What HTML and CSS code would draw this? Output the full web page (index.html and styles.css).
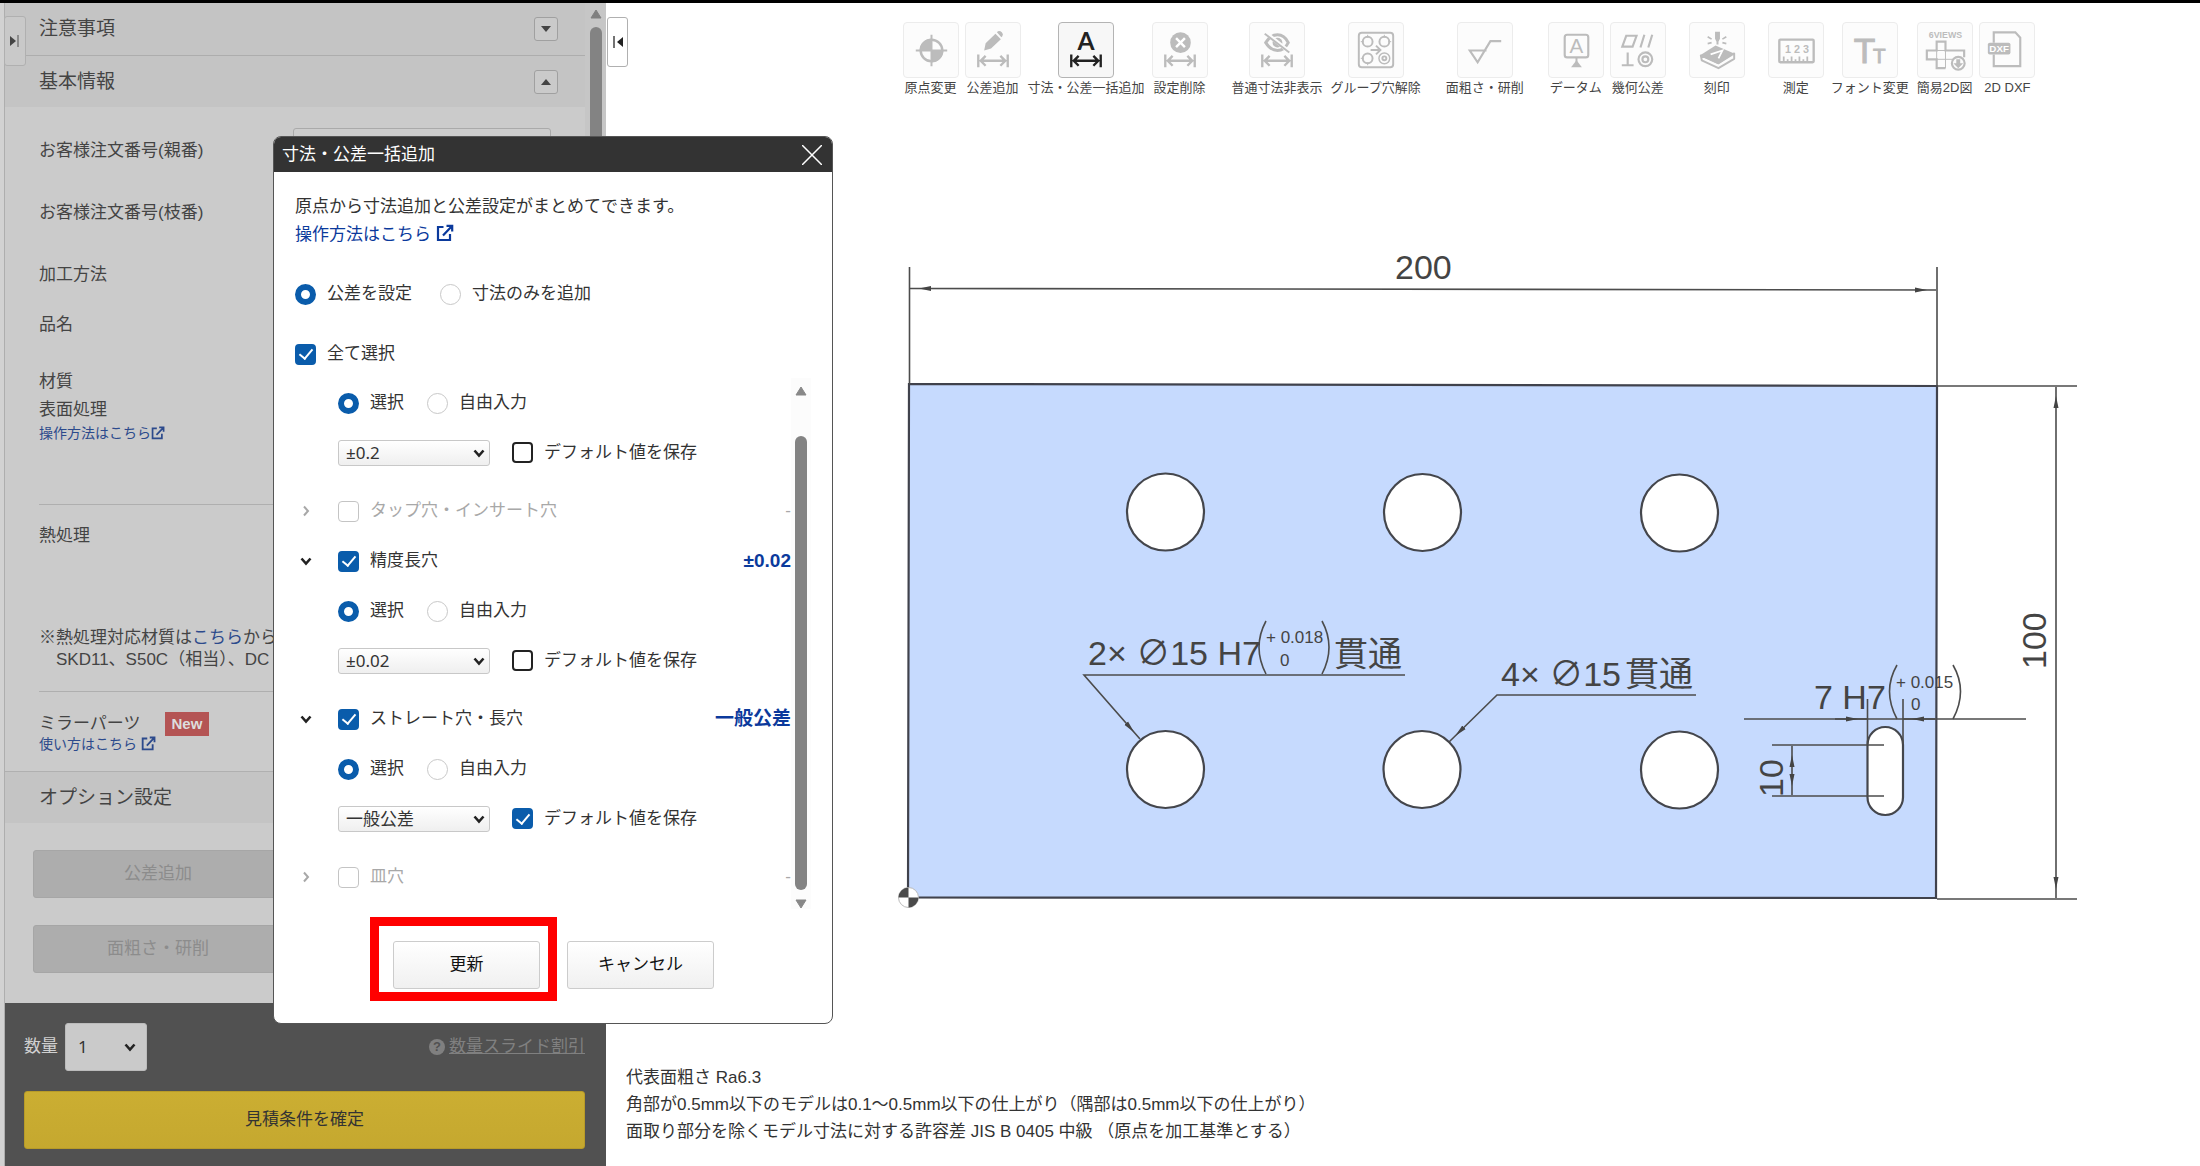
FILE: index.html
```html
<!DOCTYPE html>
<html lang="ja">
<head>
<meta charset="utf-8">
<meta name="viewport" content="width=device-width, initial-scale=1">
<title>寸法・公差一括追加</title>
<link rel="stylesheet" href="styles.css">
</head>
<body>
<svg class="sprite" aria-hidden="true">
  <symbol id="i-span" viewBox="0 0 55 55"><path d="M12.500 32v13M42.500 32v13M15 38.500h25M20 33.500l-5 5 5 5M35 33.500l5 5-5 5" fill="none" stroke="currentColor" stroke-width="2.400"/></symbol>
  <symbol id="i-ext" viewBox="0 0 18 18"><path d="M7.500 3H2v13h12v-6M10.500 1.800H16.200V7.500M16 2L7 11.500" fill="none" stroke="currentColor" stroke-width="2.200"/></symbol>
  <symbol id="i-down" viewBox="0 0 12 12"><path d="M1.500 3.500L6 8.500l4.500-5" fill="none" stroke="currentColor" stroke-width="2.600"/></symbol>
  <symbol id="i-right" viewBox="0 0 12 12"><path d="M4 1.500L8 6l-4 4.500" fill="none" stroke="currentColor" stroke-width="2"/></symbol>
</svg>
<div class="app">
  <aside class="sidebar">
    <button class="tab tab-left" aria-label="パネルを開く"><svg width="10" height="12" viewBox="0 0 10 12"><path d="M0 1l6 5-6 5z" fill="#444"/><path d="M8 0v12" stroke="#777" stroke-width="1.500"/></svg></button>
    <div class="panel">
      <div class="panel-body">
        <div class="head"><span>注意事項</span><button class="fold" aria-label="開く"><svg width="10" height="8" viewBox="0 0 10 8"><path d="M0 1h10L5 7z" fill="#444"/></svg></button></div>
        <div class="head head-open"><span>基本情報</span><button class="fold" aria-label="閉じる"><svg width="10" height="8" viewBox="0 0 10 8"><path d="M0 7h10L5 1z" fill="#444"/></svg></button></div>
        <div class="fields">
          <div class="field"><label for="parent-no">お客様注文番号(親番)</label><input id="parent-no" class="entry" type="text"></div>
          <div class="field"><span>お客様注文番号(枝番)</span></div>
          <div class="field"><span>加工方法</span></div>
          <div class="field field-low"><span>品名</span></div>
          <div class="material">
            <div>材質</div>
            <div>表面処理</div>
            <a class="small-link" href="#">操作方法はこちら<svg width="14" height="14"><use href="#i-ext"/></svg></a>
          </div>
          <div class="heat">
            <div>熱処理</div>
            <p class="heat-note">※熱処理対応材質は<a href="#">こちら</a>から<br><span class="indent">SKD11、S50C（相当）、DC</span></p>
          </div>
          <div class="mirror">
            <div class="mirror-title">ミラーパーツ<span class="new">New</span></div>
            <a class="small-link" href="#">使い方はこちら <svg width="15" height="15"><use href="#i-ext"/></svg></a>
          </div>
        </div>
        <div class="head head-option"><span>オプション設定</span></div>
        <div class="options">
          <button disabled>公差追加</button>
          <button disabled>面粗さ・研削</button>
        </div>
      </div>
      <div class="track track-side">
        <svg width="12" height="10" viewBox="0 0 12 10"><path d="M6 1l5 8H1z" fill="#808080" stroke="#808080" stroke-linejoin="round"/></svg>
        <div class="thumb"></div>
      </div>
    </div>
    <div class="order">
      <div class="order-row">
        <label for="qty">数量</label>
        <span class="pick pick-qty"><select id="qty"><option>1</option></select><svg width="12" height="12"><use href="#i-down"/></svg></span>
        <a class="slide" href="#"><span class="help">?</span><span class="slide-text">数量スライド割引</span></a>
      </div>
      <button class="confirm">見積条件を確定</button>
    </div>
  </aside>

  <main class="work">
    <button class="tab tab-right" aria-label="パネルを閉じる"><svg width="10" height="12" viewBox="0 0 10 12"><path d="M10 1L4 6l6 5z" fill="#222"/><path d="M1 0v12" stroke="#444" stroke-width="1.500"/></svg></button>
    <div class="toolbar">
      <div class="group">
        <button class="tool"><svg class="tile" viewBox="0 0 55 55"><circle cx="28" cy="28" r="11" fill="none" stroke="currentColor" stroke-width="2.500"/><path d="M28 28V16A12 12 0 0 0 16 28zM28 28v12a12 12 0 0 0 12-12z" fill="currentColor"/><path d="M28 12v32M12 28h32" stroke="currentColor" stroke-width="2"/></svg>原点変更</button>
        <button class="tool"><svg class="tile" viewBox="0 0 55 55"><path d="M18.500 28l1.500-7.500L30 11l5.500 5.500L25.500 26zM31.500 9.500l1-1q2-1 4 1t.500 4l-1 1z" fill="currentColor"/><use href="#i-span"/></svg>公差追加</button>
        <button class="tool active"><svg class="tile" viewBox="0 0 55 55"><text x="27.500" y="27" class="big-a">A</text><use href="#i-span"/></svg>寸法・公差一括追加</button>
        <button class="tool"><svg class="tile" viewBox="0 0 55 55"><circle cx="28" cy="20" r="10.500" fill="currentColor"/><path d="M23.500 15.500l9 9m0-9l-9 9" stroke="#fff" stroke-width="2.500"/><use href="#i-span"/></svg>設定削除</button>
      </div>
      <div class="group">
        <button class="tool"><svg class="tile" viewBox="0 0 55 55"><path d="M16 20q5-8 12-8t11 8q-4 8-11 8t-12-8z" fill="none" stroke="currentColor" stroke-width="3"/><circle cx="28" cy="20" r="5" fill="currentColor"/><path d="M16 10l25 20" stroke="#fcfcfc" stroke-width="4"/><path d="M15 11l25 19" stroke="currentColor" stroke-width="2"/><use href="#i-span"/></svg>普通寸法非表示</button>
        <button class="tool"><svg class="tile" viewBox="0 0 55 55"><g fill="none" stroke="currentColor" stroke-width="2"><rect x="10" y="10" width="35" height="35" rx="3"/><circle cx="19" cy="19" r="5"/><circle cx="36" cy="19" r="5"/><circle cx="19" cy="36" r="5"/><circle cx="36" cy="36" r="5.500" stroke-width="1.500"/><circle cx="36" cy="36" r="2"/><path d="M19 12v3M12 19h3M36 12v3M43 19h-3M19 43v-3M12 36h3" stroke-width="1"/><path d="M22 27.500h9M27.500 23l4.500 4.500-4.500 4.500"/></g></svg>グループ穴解除</button>
      </div>
      <div class="group">
        <button class="tool"><svg class="tile" viewBox="0 0 55 55"><path d="M29 28H12l8 12 13-21.500h11" fill="none" stroke="currentColor" stroke-width="2.200"/></svg>面粗さ・研削</button>
      </div>
      <div class="group">
        <button class="tool"><svg class="tile" viewBox="0 0 55 55"><rect x="16" y="12" width="24" height="23" rx="2.500" fill="none" stroke="currentColor" stroke-width="2.200"/><text x="28" y="31" class="box-a">A</text><path d="M28 35v5" stroke="currentColor" stroke-width="2"/><path d="M28 38l5.500 7h-11z" fill="currentColor"/></svg>データム</button>
        <button class="tool"><svg class="tile" viewBox="0 0 55 55"><g fill="none" stroke="currentColor" stroke-width="2.200"><path d="M15.500 13H26l-4 11H11.500zM34 12l-4 13M42 12l-4 13M17 30v12M11 43h12"/><circle cx="35" cy="37" r="7"/><circle cx="35" cy="37" r="3"/></g></svg>幾何公差</button>
      </div>
      <div class="group">
        <button class="tool"><svg class="tile" viewBox="0 0 55 55"><path d="M10 33l16-10 19 8-16 11z" fill="currentColor"/><path d="M11 33l18 8 16-10v5.500L29 46l-17-8z" fill="none" stroke="currentColor" stroke-width="2" stroke-linejoin="round"/><path d="M21 32l12-4-4 8" fill="none" stroke="#fff" stroke-width="1.800"/><path d="M25.500 9h5v7l-1.500 3v3h-2v-3l-1.500-3z" fill="currentColor"/><path d="M18 14l4 2.500M37 14l-4 2.500M18 21l4-1M37 21l-4-1" stroke="currentColor" stroke-width="1.600"/></svg>刻印</button>
      </div>
      <div class="group">
        <button class="tool"><svg class="tile" viewBox="0 0 55 55"><rect x="10.500" y="17" width="35" height="23" rx="1" fill="none" stroke="currentColor" stroke-width="2.400"/><text x="28.500" y="31" class="digits">1 2 3</text><path d="M15 40v-6M19 40v-3M23 40v-6M27 40v-3M31 40v-6M35 40v-3M39 40v-6" stroke="currentColor" stroke-width="1.800"/></svg>測定</button>
        <button class="tool"><svg class="tile" viewBox="0 0 55 55"><text x="22" y="41" class="t-big">T</text><text x="37" y="41" class="t-small">T</text></svg>フォント変更</button>
        <button class="tool"><svg class="tile" viewBox="0 0 55 55"><text x="28" y="15" class="views">6VIEWS</text><g fill="none" stroke="currentColor" stroke-width="2.200"><path d="M28 46h-9v-9H9V28h10v-9h9v9h19v7"/><path d="M19 28v9M19 28h9v18M19 37h17" stroke-width="1"/><circle cx="41" cy="41" r="6.500" fill="#fcfcfc"/></g><path d="M39 37h4v4h3l-5 5-5-5h3z" fill="currentColor"/></svg>簡易2D図</button>
        <button class="tool"><svg class="tile" viewBox="0 0 55 55"><path d="M14 20V9.500h22l5 5.500v29H14V32" fill="none" stroke="currentColor" stroke-width="2.200"/><rect x="8" y="20" width="23" height="12" rx="2" fill="currentColor"/><text x="19.500" y="30" class="dxf">DXF</text></svg>2D DXF</button>
      </div>
    </div>

    <svg class="drawing" viewBox="606 100 1594 940" role="img" aria-label="プレートの2D図">
      <defs><marker id="arrow" markerUnits="userSpaceOnUse" markerWidth="22" markerHeight="6" refX="21" refY="3" orient="auto-start-reverse"><path d="M0 0.500L12 3 0 5.500z" fill="#444"/></marker></defs>
      <path d="M909 384L1937 386 1936 898 908 897.500z" fill="#c6dafe" stroke="#40424c" stroke-width="2.200"/>
      <g fill="#fff" stroke="#44464c" stroke-width="2.200">
        <circle cx="1165.500" cy="512" r="38.500"/><circle cx="1422.500" cy="512.500" r="38.500"/><circle cx="1679.500" cy="513" r="38.500"/>
        <circle cx="1165.500" cy="769.500" r="38.500"/><circle cx="1422" cy="769.500" r="38.500"/><circle cx="1679.500" cy="770" r="38.500"/>
        <rect x="1867.500" y="727" width="35.500" height="88" rx="17.700"/>
      </g>
      <g fill="none" stroke="#4c4c4c" stroke-width="1.600">
        <path d="M909.500 267V384M1937 267V386M1937 386H2077M1937 899H2077"/>
        <path d="M910 288.500L1936 290" marker-start="url(#arrow)" marker-end="url(#arrow)"/>
        <path d="M2056 387V898" marker-start="url(#arrow)" marker-end="url(#arrow)"/>
        <path d="M1405 675H1084L1140 739" marker-end="url(#arrow)"/>
        <path d="M1696 695H1497L1449 742" marker-end="url(#arrow)"/>
        <path d="M1744 719H2026M1867.500 699v45M1903 699v45M1772 745h112M1772 796h112"/>
        <path d="M1792 746v49" marker-start="url(#arrow)" marker-end="url(#arrow)"/>
        <path d="M1835 719h32" marker-end="url(#arrow)"/>
        <path d="M1935 719h-32" marker-end="url(#arrow)"/>
        <path d="M1266 621q-14 26 0 53M1322 621q14 26 0 53M1897 665q-15 26 0 54M1953 665q15 26 0 54"/>
      </g>
      <g class="dims">
        <text x="1395" y="279">200</text>
        <text x="1088" y="665">2× ∅15 H7</text>
        <text x="1334" y="666">貫通</text>
        <text x="1501" y="686">4× ∅15</text>
        <text x="1625" y="686">貫通</text>
        <text x="1814" y="709">7 H7</text>
        <text transform="translate(2046 669) rotate(-90)">100</text>
        <text transform="translate(1783 797) rotate(-90)">10</text>
      </g>
      <g class="tol">
        <text x="1266" y="643">+ 0.018</text><text x="1280" y="666">0</text>
        <text x="1896" y="688">+ 0.015</text><text x="1911" y="710">0</text>
      </g>
      <circle cx="908.500" cy="897.500" r="10" fill="#fff" stroke="#bbb" stroke-width="1"/>
      <path d="M908.500 897.500v-10a10 10 0 0 0-10 10zM908.500 897.500v10a10 10 0 0 0 10-10z" fill="#4a4a4a"/>
    </svg>

    <div class="notes">
      <p>代表面粗さ Ra6.3</p>
      <p>角部が0.5mm以下のモデルは0.1～0.5mm以下の仕上がり（隅部は0.5mm以下の仕上がり）</p>
      <p>面取り部分を除くモデル寸法に対する許容差 JIS B 0405 中級 （原点を加工基準とする）</p>
    </div>
  </main>

  <section class="dialog" role="dialog" aria-labelledby="dialog-title">
    <header class="dialog-head"><h1 id="dialog-title">寸法・公差一括追加</h1><button class="close" aria-label="閉じる"><svg width="20" height="20" viewBox="0 0 20 20"><path d="M0 0l20 20M20 0L0 20" stroke="#fff" stroke-width="1.500"/></svg></button></header>
    <div class="dialog-body">
      <p class="intro">原点から寸法追加と公差設定がまとめてできます。</p>
      <p class="intro"><a href="#">操作方法はこちら <svg width="18" height="18"><use href="#i-ext"/></svg></a></p>
      <div class="mode"><label class="opt"><input type="radio" name="mode" checked>公差を設定</label><label class="opt"><input type="radio" name="mode">寸法のみを追加</label></div>
      <div class="all"><label class="opt"><input type="checkbox" checked>全て選択</label></div>
      <div class="scroller">
        <div class="list">
          <div class="item-body">
            <div class="line"><label class="opt"><input type="radio" name="a" checked>選択</label><label class="opt"><input type="radio" name="a">自由入力</label></div>
            <div class="line line-pick"><span class="pick"><select aria-label="公差"><option>±0.2</option></select><svg width="12" height="12"><use href="#i-down"/></svg></span><label class="opt"><input type="checkbox">デフォルト値を保存</label></div>
          </div>
          <div class="line item off"><svg width="12" height="12"><use href="#i-right"/></svg><label class="opt"><input type="checkbox" disabled>タップ穴・インサート穴</label><span class="value">-</span></div>
          <div class="line item"><svg width="12" height="12"><use href="#i-down"/></svg><label class="opt"><input type="checkbox" checked>精度長穴</label><span class="value">±0.02</span></div>
          <div class="item-body">
            <div class="line"><label class="opt"><input type="radio" name="b" checked>選択</label><label class="opt"><input type="radio" name="b">自由入力</label></div>
            <div class="line line-pick"><span class="pick"><select aria-label="公差"><option>±0.02</option></select><svg width="12" height="12"><use href="#i-down"/></svg></span><label class="opt"><input type="checkbox">デフォルト値を保存</label></div>
          </div>
          <div class="line item"><svg width="12" height="12"><use href="#i-down"/></svg><label class="opt"><input type="checkbox" checked>ストレート穴・長穴</label><span class="value">一般公差</span></div>
          <div class="item-body">
            <div class="line"><label class="opt"><input type="radio" name="c" checked>選択</label><label class="opt"><input type="radio" name="c">自由入力</label></div>
            <div class="line line-pick"><span class="pick"><select aria-label="公差"><option>一般公差</option></select><svg width="12" height="12"><use href="#i-down"/></svg></span><label class="opt"><input type="checkbox" checked>デフォルト値を保存</label></div>
          </div>
          <div class="line item off"><svg width="12" height="12"><use href="#i-right"/></svg><label class="opt"><input type="checkbox" disabled>皿穴</label><span class="value">-</span></div>
        </div>
        <div class="track track-list">
          <svg width="12" height="10" viewBox="0 0 12 10"><path d="M6 1l5 8H1z" fill="#888" stroke="#888" stroke-linejoin="round"/></svg>
          <div class="thumb"></div>
          <svg width="12" height="10" viewBox="0 0 12 10"><path d="M6 9l5-8H1z" fill="#888" stroke="#888" stroke-linejoin="round"/></svg>
        </div>
      </div>
      <div class="actions"><span class="marked"><button class="action">更新</button></span><button class="action">キャンセル</button></div>
    </div>
  </section>
</div>
</body>
</html>
```
FILE: styles.css
```css
* { box-sizing: border-box; }

body {
  margin: 0;
  border-top: 3px solid #000;
  background: #fff;
  color: #333;
  font: 17px/24px "Liberation Sans", "Noto Sans CJK JP", sans-serif;
}

button, select, input { font: inherit; color: inherit; margin: 0; }
p, h1 { margin: 0; font-size: inherit; font-weight: inherit; }
a { color: #0b3a9c; text-decoration: none; }
svg { flex: none; }
.sprite { position: absolute; width: 0; height: 0; }

.app {
  position: relative;
  display: flex;
  min-height: calc(100vh - 3px);
  padding-left: 4px;
  background: linear-gradient(to right, #d2d2d2 4px, #fff 4px);
}

/* Left settings panel, dimmed while the dialog is open */
.sidebar {
  position: relative;
  display: flex;
  flex-direction: column;
  flex: 0 0 602px;
  background: #cbcbcb;
  border-left: 1px solid #aeaeae;
  color: #444;
}
.panel { display: flex; flex: 1; }
.panel-body { flex: 1; min-width: 0; }
.head {
  display: flex;
  align-items: center;
  justify-content: space-between;
  height: 52px;
  padding: 0 27px 0 34px;
  background: #c4c4c4;
  font-size: 19px;
}
.head-open { border-top: 1px solid #adadad; }
.head-option { border-top: 1px solid #b0b0b0; }
.fold {
  display: grid;
  place-items: center;
  width: 24px;
  height: 24px;
  padding: 0;
  background: #cacaca;
  border: 1px solid #a0a0a0;
  border-radius: 3px;
}
.fields { padding: 13px 0 18px 34px; }
.field { display: flex; align-items: center; height: 62px; }
.field label, .field > span { flex: 0 0 254px; white-space: nowrap; }
.entry {
  width: 258px;
  height: 46px;
  background: #cdcdcd;
  border: 1px solid #aaa;
  border-radius: 3px;
}
.field-low { height: 38px; }
.material, .heat { border-bottom: 1px solid #afafaf; }
.material { padding: 24px 0 62px; line-height: 28px; }
.small-link { display: block; font-size: 14px; line-height: 18px; }
.small-link svg { vertical-align: -2px; }
.sidebar a { color: #2c4a8c; }
.heat { padding: 19px 0 20px; }
.heat-note { padding-top: 79px; line-height: 22px; white-space: nowrap; }
.indent { padding-left: 17px; }
.mirror { padding-top: 21px; }
.mirror-title { display: flex; align-items: center; gap: 24px; height: 22px; }
.new {
  padding: 0 7px;
  background: #b45454;
  color: #ddd;
  font-size: 15px;
  font-weight: bold;
}
.options {
  display: grid;
  grid-template-columns: 250px;
  gap: 27px;
  padding: 27px 28px;
}
.options button {
  height: 48px;
  background: #adadad;
  border: 1px solid #a6a6a6;
  border-radius: 3px;
  color: #8c8c8c;
}

.track { display: flex; flex-direction: column; align-items: center; flex: none; }
.track-side { width: 21px; padding-top: 6px; gap: 8px; background: #c6c6c6; }
.track-side .thumb { height: 400px; }
.thumb { width: 12px; border-radius: 6px; background: #838383; }

.order {
  display: grid;
  gap: 20px;
  padding: 20px 21px 18px 19px;
  background: #515151;
  color: #d0d0d0;
}
.order-row { display: flex; align-items: center; gap: 7px; }
.pick { position: relative; display: flex; align-items: center; }
.pick select {
  appearance: none;
  width: 152px;
  height: 26px;
  padding: 0 7px;
  border: 1px solid #c8c8c8;
  border-radius: 3px;
  background: linear-gradient(#fff, #efefef);
  color: #333;
  font: 17px/22px "Noto Sans", "Noto Sans CJK JP", sans-serif;
}
.pick svg { position: absolute; right: 5px; color: #222; pointer-events: none; }
.pick-qty select { width: 82px; height: 48px; padding: 0 12px; background: #cacaca; border-color: #bbb; }
.pick-qty svg { right: 11px; }
.sidebar .slide { display: flex; align-items: center; gap: 4px; margin-left: auto; color: #808080; }
.slide-text { text-decoration: underline; }
.help {
  width: 16px;
  height: 16px;
  border-radius: 8px;
  background: #808080;
  color: #515151;
  font-size: 13px;
  font-weight: bold;
  line-height: 16px;
  text-align: center;
}
.confirm {
  height: 58px;
  border: 1px solid #b89b28;
  border-radius: 3px;
  background: linear-gradient(#cbae32, #c5a82f);
  color: #333;
}

.tab {
  position: absolute;
  display: grid;
  place-items: center;
  height: 50px;
  padding: 0;
  border: 1px solid #b0b0b0;
  border-radius: 3px;
}
.tab-left { top: 13px; left: -1px; width: 22px; background: #c9c9c9; }
.tab-right { top: 14px; left: 1px; width: 21px; background: #fff; }

/* Drawing area */
.work { position: relative; flex: 1; min-width: 0; background: #fff; }
.toolbar {
  display: flex;
  justify-content: center;
  gap: 23px;
  height: 97px;
  padding: 19px 0 0 132px;
}
.group { display: flex; align-items: flex-start; gap: 6px; }
.tool {
  display: flex;
  flex-direction: column;
  align-items: center;
  min-width: 56px;
  padding: 0 1px;
  border: 0;
  background: none;
  color: #444;
  font-size: 13px;
  line-height: 20px;
  white-space: nowrap;
}
.tile {
  width: 56px;
  height: 56px;
  margin: 0 -1px;
  border: 1px solid #ececec;
  border-radius: 4px;
  background: #fcfcfc;
  color: #bcbcbc;
}
.active .tile { border-color: #b4b4b4; background: #f7f7f7; color: #222; }
.tile text {
  fill: currentColor;
  text-anchor: middle;
  font-family: "Liberation Sans", sans-serif;
}
.tile .big-a { font-family: Lato, sans-serif; font-size: 25px; font-weight: bold; }
.box-a { font-size: 21px; }
.digits { font-size: 11px; font-weight: bold; }
.t-big { font-size: 36px; stroke: currentColor; }
.t-small { font-size: 21px; stroke: currentColor; }
.views { font-size: 9px; font-weight: bold; }
.tile .dxf { font-size: 10px; font-weight: bold; fill: #fff; }

.drawing { display: block; width: 100%; }
.dims { fill: #444; font: 34px "Liberation Sans", "Noto Sans CJK JP", sans-serif; }
.tol { fill: #444; font: 17px "Liberation Sans", sans-serif; }
.notes { padding: 24px 20px 22px; line-height: 27px; }

/* Dialog */
.dialog {
  position: absolute;
  top: 133px;
  left: 273px;
  width: 560px;
  border: 1px solid #555;
  border-radius: 8px;
  background: #fff;
  overflow: hidden;
}
.dialog-head {
  display: flex;
  align-items: center;
  justify-content: space-between;
  height: 35px;
  padding: 0 10px 0 8px;
  background: #333;
  color: #fff;
}
.close { display: flex; padding: 0; border: 0; background: none; }
.dialog-body { padding: 21px 21px 34px; }
.intro { line-height: 28px; }
.intro svg { vertical-align: -2px; }
.mode, .all, .line { display: flex; align-items: center; }
.mode { gap: 28px; height: 22px; margin-top: 34px; }
.all { height: 22px; margin-top: 38px; }
.opt { display: flex; align-items: center; gap: 11px; white-space: nowrap; }
.opt input {
  appearance: none;
  flex: none;
  width: 21px;
  height: 21px;
  border: 1px solid #c8c8c8;
  background: #fff;
}
.opt input[type="radio"] { border-radius: 11px; }
.opt input[type="radio"]:checked { border: 6px solid #0a5cab; }
.opt input[type="checkbox"] { display: grid; place-items: center; border: 2px solid #222; border-radius: 4px; }
.opt input[type="checkbox"]:checked { border-color: #0a5cab; background: #0a5cab; }
.opt input[type="checkbox"]:checked::after {
  content: "";
  width: 6px;
  height: 11px;
  margin-bottom: 3px;
  border: solid #fff;
  border-width: 0 2px 2px 0;
  transform: rotate(40deg);
}
.opt input[type="checkbox"]:disabled { border: 1px solid #c4c4c4; }
.scroller { display: flex; margin-top: 13px; }
.list { flex: 1; min-width: 0; padding-bottom: 7px; }
.line { height: 50px; gap: 23px; }
.item-body { padding: 0 0 9px 43px; }
.line-pick { height: 49px; gap: 22px; }
.item { gap: 26px; }
.item > svg { margin-left: 5px; color: #222; }
.off, .off > svg { color: #a8a8a8; }
.value { margin-left: auto; color: #0b3a9c; font-size: 19px; font-weight: bold; }
.off .value { color: #a8a8a8; font-size: 17px; font-weight: normal; }
.track-list { width: 20px; padding-top: 8px; background: #fcfcfc; }
.track-list .thumb { flex: 1; margin: 40px 0 9px; }
.actions { display: flex; gap: 27px; padding: 32px 0 0 98px; }
.action {
  width: 147px;
  height: 48px;
  border: 1px solid #ccc;
  border-radius: 3px;
  background: linear-gradient(#fff, #f0f0f0);
  color: #111;
}
.marked { position: relative; }
.marked::after {
  content: "";
  position: absolute;
  inset: -24px -17px -12px -23px;
  border: 9px solid #f00;
  pointer-events: none;
}
```
